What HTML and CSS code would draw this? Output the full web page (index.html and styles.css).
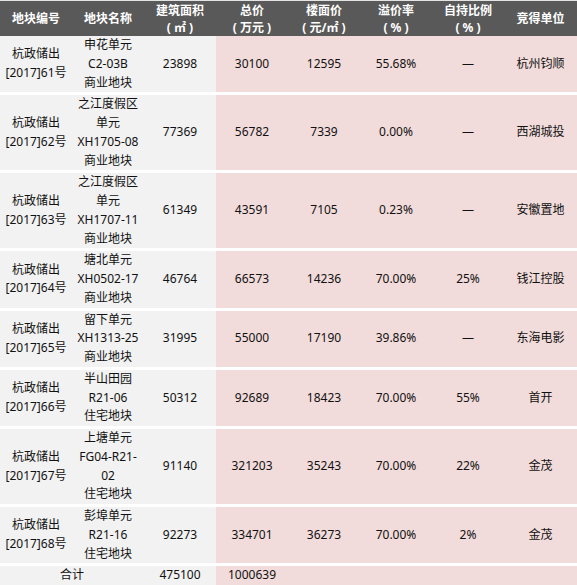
FILE: index.html
```html
<!DOCTYPE html>
<html lang="zh-CN">
<head>
<meta charset="utf-8">
<link rel="stylesheet" href="styles.css">
</head>
<body>
<table class="land">
  <colgroup>
    <col class="c"><col class="c"><col class="c"><col class="c"><col class="c"><col class="c"><col class="c"><col class="c-last">
  </colgroup>
  <thead>
    <tr>
      <th>地块编号</th>
      <th>地块名称</th>
      <th>建筑面积<br>( ㎡ )</th>
      <th>总价<br>( 万元 )</th>
      <th>楼面价<br>( 元/㎡ )</th>
      <th>溢价率<br>( % )</th>
      <th>自持比例<br>( % )</th>
      <th>竞得单位</th>
    </tr>
  </thead>
  <tbody>
    <tr>
      <td class="g">杭政储出<br>[2017]61号</td>
      <td class="g">申花单元<br>C2-03B<br>商业地块</td>
      <td class="g">23898</td>
      <td class="p">30100</td>
      <td class="p">12595</td>
      <td class="p">55.68%</td>
      <td class="p">—</td>
      <td class="p">杭州钧顺</td>
    </tr>
    <tr>
      <td class="g">杭政储出<br>[2017]62号</td>
      <td class="g">之江度假区<br>单元<br>XH1705-08<br>商业地块</td>
      <td class="g">77369</td>
      <td class="p">56782</td>
      <td class="p">7339</td>
      <td class="p">0.00%</td>
      <td class="p">—</td>
      <td class="p">西湖城投</td>
    </tr>
    <tr>
      <td class="g">杭政储出<br>[2017]63号</td>
      <td class="g">之江度假区<br>单元<br>XH1707-11<br>商业地块</td>
      <td class="g">61349</td>
      <td class="p">43591</td>
      <td class="p">7105</td>
      <td class="p">0.23%</td>
      <td class="p">—</td>
      <td class="p">安徽置地</td>
    </tr>
    <tr>
      <td class="g">杭政储出<br>[2017]64号</td>
      <td class="g">塘北单元<br>XH0502-17<br>商业地块</td>
      <td class="g">46764</td>
      <td class="p">66573</td>
      <td class="p">14236</td>
      <td class="p">70.00%</td>
      <td class="p">25%</td>
      <td class="p">钱江控股</td>
    </tr>
    <tr>
      <td class="g">杭政储出<br>[2017]65号</td>
      <td class="g">留下单元<br>XH1313-25<br>商业地块</td>
      <td class="g">31995</td>
      <td class="p">55000</td>
      <td class="p">17190</td>
      <td class="p">39.86%</td>
      <td class="p">—</td>
      <td class="p">东海电影</td>
    </tr>
    <tr>
      <td class="g">杭政储出<br>[2017]66号</td>
      <td class="g">半山田园<br>R21-06<br>住宅地块</td>
      <td class="g">50312</td>
      <td class="p">92689</td>
      <td class="p">18423</td>
      <td class="p">70.00%</td>
      <td class="p">55%</td>
      <td class="p">首开</td>
    </tr>
    <tr>
      <td class="g">杭政储出<br>[2017]67号</td>
      <td class="g">上塘单元<br>FG04-R21-<br>02<br>住宅地块</td>
      <td class="g">91140</td>
      <td class="p">321203</td>
      <td class="p">35243</td>
      <td class="p">70.00%</td>
      <td class="p">22%</td>
      <td class="p">金茂</td>
    </tr>
    <tr>
      <td class="g">杭政储出<br>[2017]68号</td>
      <td class="g">彭埠单元<br>R21-16<br>住宅地块</td>
      <td class="g">92273</td>
      <td class="p">334701</td>
      <td class="p">36273</td>
      <td class="p">70.00%</td>
      <td class="p">2%</td>
      <td class="p">金茂</td>
    </tr>
    <tr class="total">
      <td class="g" colspan="2">合计</td>
      <td class="g">475100</td>
      <td class="p">1000639</td>
      <td class="p"></td>
      <td class="p"></td>
      <td class="p"></td>
      <td class="p"></td>
    </tr>
  </tbody>
</table>
</body>
</html>
```
FILE: styles.css
```css
html, body {
  margin: 0;
  padding: 0;
  background: #ffffff;
}

body {
  font-family: "Noto Sans", "Noto Sans CJK SC", sans-serif;
  font-size: 12px;
  color: #111111;
}

.land {
  width: 577px;
  table-layout: fixed;
  border-collapse: separate;
  border-spacing: 0;
  border-top: 1px solid #e4e4e4;
}

.land col.c {
  width: 72px;
}

.land col.c-last {
  width: 73px;
}

.land th {
  background: #595959;
  color: #ffffff;
  font-weight: bold;
  font-size: 12px;
  line-height: 17px;
  height: 35px;
  padding: 0 2px;
  text-align: center;
  vertical-align: middle;
  box-sizing: border-box;
  white-space: pre;
}

.land td {
  line-height: 18.75px;
  padding: 0 2px;
  text-align: center;
  vertical-align: middle;
  border-bottom: 3px solid #ffffff;
  white-space: nowrap;
}

.land td.g {
  background: #f2f2f2;
}

.land td.p {
  background: #f2dcdb;
}

.land tr.total td {
  border-bottom: 0;
}
```
